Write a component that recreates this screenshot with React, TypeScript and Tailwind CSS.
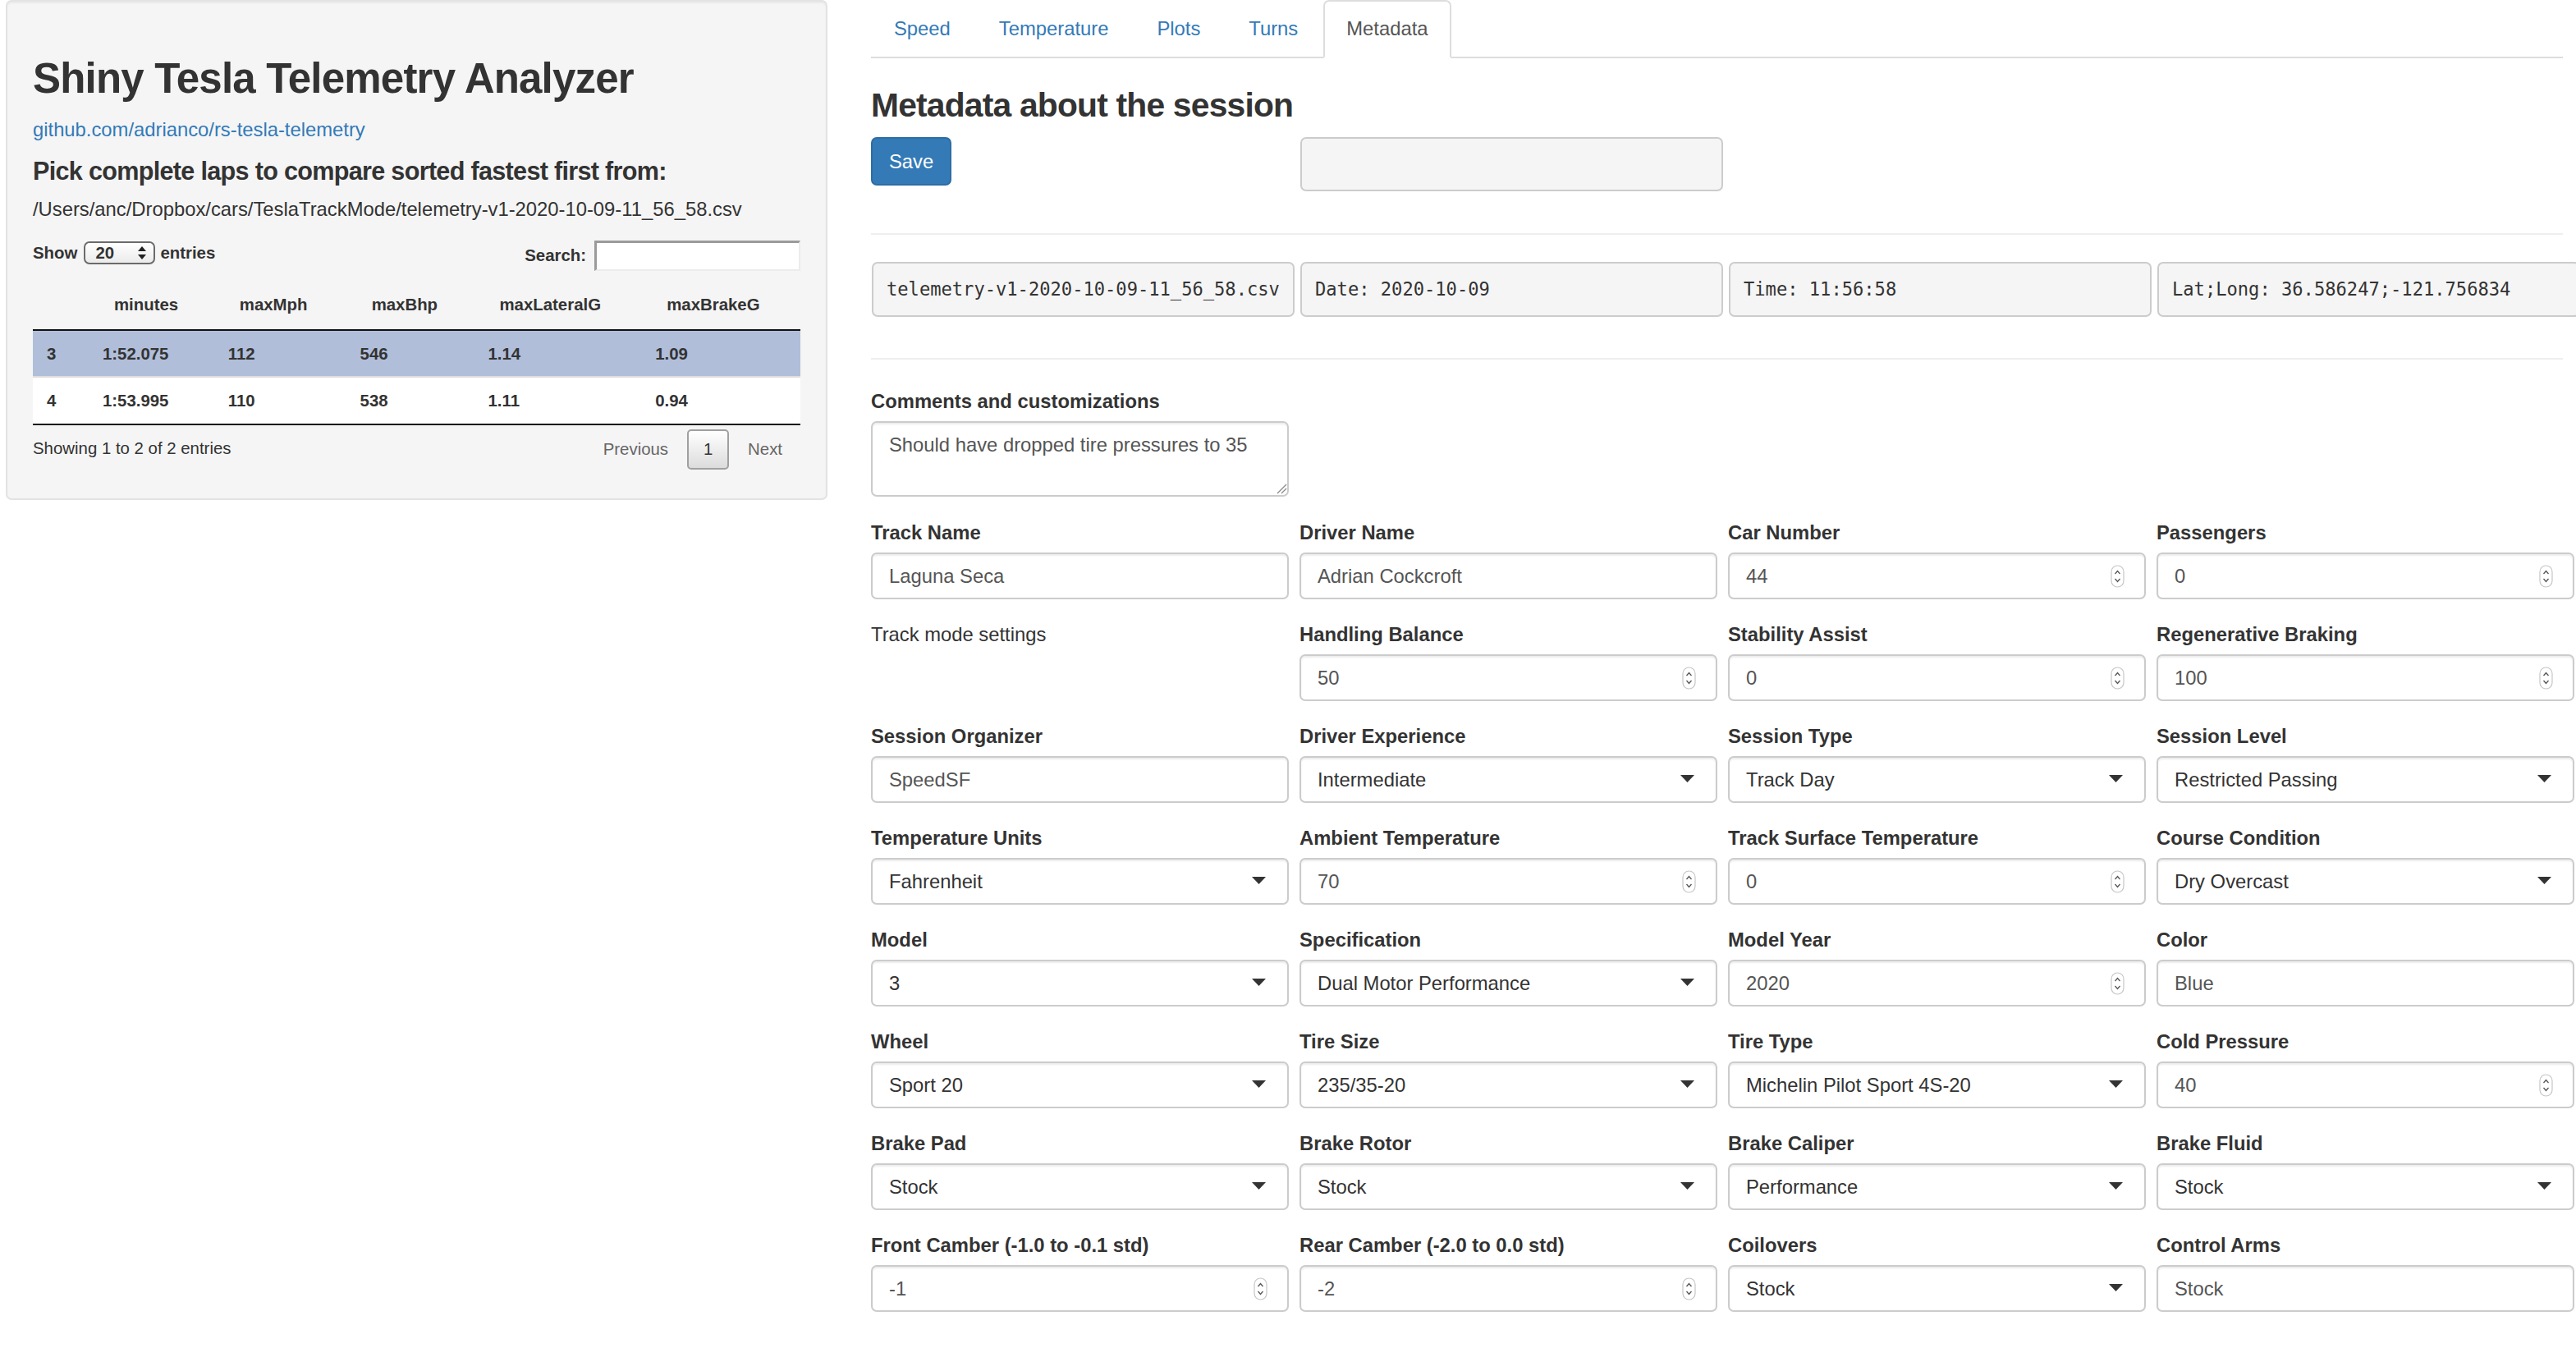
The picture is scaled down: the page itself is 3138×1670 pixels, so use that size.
import React from 'react';

type Kind = 'text' | 'num' | 'select' | 'note';

interface Field {
  label: string;
  kind: Kind;
  value?: string;
}

const rows: Field[][] = [
  [
    { label: 'Track Name', kind: 'text', value: 'Laguna Seca' },
    { label: 'Driver Name', kind: 'text', value: 'Adrian Cockcroft' },
    { label: 'Car Number', kind: 'num', value: '44' },
    { label: 'Passengers', kind: 'num', value: '0' },
  ],
  [
    { label: 'Track mode settings', kind: 'note' },
    { label: 'Handling Balance', kind: 'num', value: '50' },
    { label: 'Stability Assist', kind: 'num', value: '0' },
    { label: 'Regenerative Braking', kind: 'num', value: '100' },
  ],
  [
    { label: 'Session Organizer', kind: 'text', value: 'SpeedSF' },
    { label: 'Driver Experience', kind: 'select', value: 'Intermediate' },
    { label: 'Session Type', kind: 'select', value: 'Track Day' },
    { label: 'Session Level', kind: 'select', value: 'Restricted Passing' },
  ],
  [
    { label: 'Temperature Units', kind: 'select', value: 'Fahrenheit' },
    { label: 'Ambient Temperature', kind: 'num', value: '70' },
    { label: 'Track Surface Temperature', kind: 'num', value: '0' },
    { label: 'Course Condition', kind: 'select', value: 'Dry Overcast' },
  ],
  [
    { label: 'Model', kind: 'select', value: '3' },
    { label: 'Specification', kind: 'select', value: 'Dual Motor Performance' },
    { label: 'Model Year', kind: 'num', value: '2020' },
    { label: 'Color', kind: 'text', value: 'Blue' },
  ],
  [
    { label: 'Wheel', kind: 'select', value: 'Sport 20' },
    { label: 'Tire Size', kind: 'select', value: '235/35-20' },
    { label: 'Tire Type', kind: 'select', value: 'Michelin Pilot Sport 4S-20' },
    { label: 'Cold Pressure', kind: 'num', value: '40' },
  ],
  [
    { label: 'Brake Pad', kind: 'select', value: 'Stock' },
    { label: 'Brake Rotor', kind: 'select', value: 'Stock' },
    { label: 'Brake Caliper', kind: 'select', value: 'Performance' },
    { label: 'Brake Fluid', kind: 'select', value: 'Stock' },
  ],
  [
    { label: 'Front Camber (-1.0 to -0.1 std)', kind: 'num', value: '-1' },
    { label: 'Rear Camber (-2.0 to 0.0 std)', kind: 'num', value: '-2' },
    { label: 'Coilovers', kind: 'select', value: 'Stock' },
    { label: 'Control Arms', kind: 'text', value: 'Stock' },
  ],
];

const laps = [
  ['3', '1:52.075', '112', '546', '1.14', '1.09'],
  ['4', '1:53.995', '110', '538', '1.11', '0.94'],
];

const colWidths = ['w-[68px]', 'w-[153px]', 'w-[161px]', 'w-[156px]', 'w-[204px]', 'w-[194px]'];
const headers = ['', 'minutes', 'maxMph', 'maxBhp', 'maxLateralG', 'maxBrakeG'];

const tabs = ['Speed', 'Temperature', 'Plots', 'Turns', 'Metadata'];

const metaBoxes = [
  'telemetry-v1-2020-10-09-11_56_58.csv',
  'Date: 2020-10-09',
  'Time: 11:56:58',
  'Lat;Long: 36.586247;-121.756834',
];

const inputBox =
  'relative flex items-center h-[57px] rounded-[7px] border-2 border-[#ccc] bg-white px-[20px] text-[23.8px] shadow-[inset_0_2px_2px_rgba(0,0,0,0.075)]';

const Spinner = () => (
  <svg width="17" height="28" viewBox="0 0 17 28" className="absolute right-[24px] top-[13px]">
    <rect x="1" y="1" width="15" height="26" rx="7.5" fill="white" stroke="#c6c6c6" strokeWidth="1.2" />
    <polyline points="5.5,11 8.5,7.5 11.5,11" fill="none" stroke="#555" strokeWidth="1.3" />
    <polyline points="5.5,17 8.5,20.5 11.5,17" fill="none" stroke="#555" strokeWidth="1.3" />
  </svg>
);

const Caret = () => (
  <svg width="17" height="9" viewBox="0 0 17 9" className="absolute right-[26px] top-[21px]">
    <polygon points="0,0 17,0 8.5,9" fill="#333" />
  </svg>
);

const FormField: React.FC<{ field: Field }> = ({ field }) => {
  if (field.kind === 'note') {
    return (
      <div className="w-[509px] shrink-0">
        <div className="h-[34px] leading-[34px] text-[23.8px] text-[#333]">{field.label}</div>
      </div>
    );
  }
  return (
    <div className="w-[509px] shrink-0">
      <div className="h-[34px] leading-[34px] text-[23.8px] font-bold text-[#333] whitespace-nowrap">
        {field.label}
      </div>
      <div className={`mt-[7px] ${inputBox} ${field.kind === 'select' ? 'text-[#333]' : 'text-[#555]'}`}>
        <span className="whitespace-nowrap">{field.value}</span>
        {field.kind === 'num' && <Spinner />}
        {field.kind === 'select' && <Caret />}
      </div>
    </div>
  );
};

const Sidebar = () => (
  <div className="ml-[7px] w-[1001px] shrink-0 rounded-[7px] border-2 border-[#e3e3e3] bg-[#f5f5f5] px-[31px] pt-[32px] pb-[35px] shadow-[inset_0_2px_2px_rgba(0,0,0,0.05)] text-[#333]">
    <h2 className="mt-[34px] h-[56px] leading-[56px] text-[51px] font-bold tracking-[-0.8px] whitespace-nowrap">
      Shiny Tesla Telemetry Analyzer
    </h2>
    <div className="mt-[17px] h-[34px] leading-[34px] text-[23.8px] text-[#337ab7]">
      github.com/adrianco/rs-tesla-telemetry
    </div>
    <h4 className="mt-[16px] h-[34px] leading-[34px] text-[30.6px] font-bold tracking-[-0.7px] whitespace-nowrap">
      Pick complete laps to compare sorted fastest first from:
    </h4>
    <div className="mt-[13px] h-[34px] leading-[34px] text-[23.8px] whitespace-nowrap">
      /Users/anc/Dropbox/cars/TeslaTrackMode/telemetry-v1-2020-10-09-11_56_58.csv
    </div>

    {/* length menu + search */}
    <div className="mt-[21px] flex h-[38px] items-start text-[20.4px] font-bold">
      <div className="flex items-center h-[30px]">
        <span className="leading-[28px]">Show</span>
        <div className="ml-[8px] flex h-[28px] w-[87px] items-center justify-between rounded-[7px] border-2 border-[#6b6b6b] bg-linear-to-b from-white to-[#ebebeb] pl-[12px] pr-[9px]">
          <span className="leading-[24px]">20</span>
          <svg width="10" height="18" viewBox="0 0 10 18">
            <polygon points="0,7 5,1 10,7" fill="#222" />
            <polygon points="0,11 5,17 10,11" fill="#222" />
          </svg>
        </div>
        <span className="ml-[6px] leading-[28px]">entries</span>
      </div>
      <div className="flex-1" />
      <span className="leading-[37px]">Search:</span>
      <div className="ml-[10px] h-[37px] w-[251px] border-t-[3px] border-l-[3px] border-r-2 border-b-2 border-t-[#9a9a9a] border-l-[#9a9a9a] border-r-[#ececec] border-b-[#ececec] bg-white" />
    </div>

    {/* table */}
    <div className="text-[20.4px] font-bold">
      <div className="flex h-[70px] items-end pb-[17px]">
        {headers.map((h, i) => (
          <div key={i} className={`${colWidths[i]} leading-[26px] pl-[31px] whitespace-nowrap`}>
            {h}
          </div>
        ))}
      </div>
      <div className="h-[2px] bg-[#111]" />
      {laps.map((r, ri) => (
        <div
          key={ri}
          className={`flex items-center ${
            ri === 0 ? 'h-[55px] bg-[#b0bed9] pt-[2px]' : 'h-[58px] border-t-2 border-[#ddd] bg-white'
          }`}
        >
          {r.map((c, ci) => (
            <div key={ci} className={`${colWidths[ci]} pl-[17px] whitespace-nowrap`}>
              {c}
            </div>
          ))}
        </div>
      ))}
      <div className="h-[2px] bg-[#111]" />
    </div>

    <div className="flex h-[54px] items-center justify-between text-[20.4px]">
      <span className="mt-[2px]">Showing 1 to 2 of 2 entries</span>
      <div className="flex items-center gap-[3px] pr-[2px] mt-[5px]">
        <span className="px-[20px] text-[#666]">Previous</span>
        <div className="flex h-[49px] w-[51px] items-center justify-center rounded-[5px] border-2 border-[#a0a0a0] bg-linear-to-b from-white to-[#dcdcdc]">
          1
        </div>
        <span className="px-[20px] text-[#666]">Next</span>
      </div>
    </div>
  </div>
);

export default function App() {
  return (
    <div className="flex h-[1670px] w-[3138px] items-start overflow-hidden bg-white font-['Liberation_Sans','Helvetica_Neue',Arial,sans-serif] text-[#333]">
      <Sidebar />

      <div className="ml-[53px] w-[2061px] shrink-0">
        {/* tabs */}
        <div className="flex h-[71px] border-b-2 border-[#ddd] text-[23.8px]">
          {tabs.map((t) =>
            t === 'Metadata' ? (
              <div
                key={t}
                className="-mb-[2px] mr-[3px] h-[71px] rounded-t-[7px] border-2 border-[#ddd] border-b-white bg-white px-[26px] pt-[16px] leading-[34px] text-[#555]"
              >
                {t}
              </div>
            ) : (
              <div
                key={t}
                className="-mb-[2px] mr-[3px] h-[71px] border-2 border-transparent px-[26px] pt-[16px] leading-[34px] text-[#337ab7]"
              >
                {t}
              </div>
            )
          )}
        </div>

        <h3 className="mt-[35px] h-[45px] leading-[45px] text-[40.8px] font-bold tracking-[-0.8px] text-[#333]">
          Metadata about the session
        </h3>

        <div className="mt-[16px] flex items-start gap-[14px]">
          <div className="w-[509px] shrink-0">
            <div className="inline-flex h-[59px] items-center rounded-[7px] border-2 border-[#2e6da4] bg-[#337ab7] px-[20px] text-[23.8px] text-white">
              Save
            </div>
          </div>
          <div className="h-[66px] w-[515px] shrink-0 rounded-[7px] border-2 border-[#ccc] bg-[#f5f5f5]" />
        </div>

        <div className="mt-[51px] border-t-2 border-[#eee]" />

        <div className="ml-[1px] mt-[33px] flex gap-[7px]">
          {metaBoxes.map((m) => (
            <div
              key={m}
              className="flex h-[67px] w-[515px] shrink-0 items-center rounded-[7px] border-2 border-[#ccc] bg-[#f5f5f5] px-[16px] font-['DejaVu_Sans_Mono',Menlo,monospace] text-[22.1px] text-[#333] whitespace-nowrap"
            >
              {m}
            </div>
          ))}
        </div>

        <div className="mt-[50px] border-t-2 border-[#eee]" />

        <div className="mt-[34px] h-[34px] leading-[34px] text-[23.8px] font-bold">Comments and customizations</div>
        <div className="relative mt-[7px] h-[92px] w-[509px] rounded-[7px] border-2 border-[#ccc] bg-white px-[20px] pt-[10px] text-[23.8px] leading-[34px] text-[#555] shadow-[inset_0_2px_2px_rgba(0,0,0,0.075)]">
          Should have dropped tire pressures to 35
          <svg width="14" height="14" viewBox="0 0 14 14" className="absolute bottom-[1px] right-0">
            <line x1="13" y1="2" x2="2" y2="13" stroke="#8a8a8a" strokeWidth="1.3" />
            <line x1="13" y1="7" x2="7" y2="13" stroke="#8a8a8a" strokeWidth="1.3" />
          </svg>
        </div>

        <div className="mt-[27px]">
          {rows.map((row, i) => (
            <div key={i} className="mb-[26px] flex gap-[13px]">
              {row.map((f) => (
                <FormField key={f.label} field={f} />
              ))}
            </div>
          ))}
        </div>
      </div>
    </div>
  );
}
